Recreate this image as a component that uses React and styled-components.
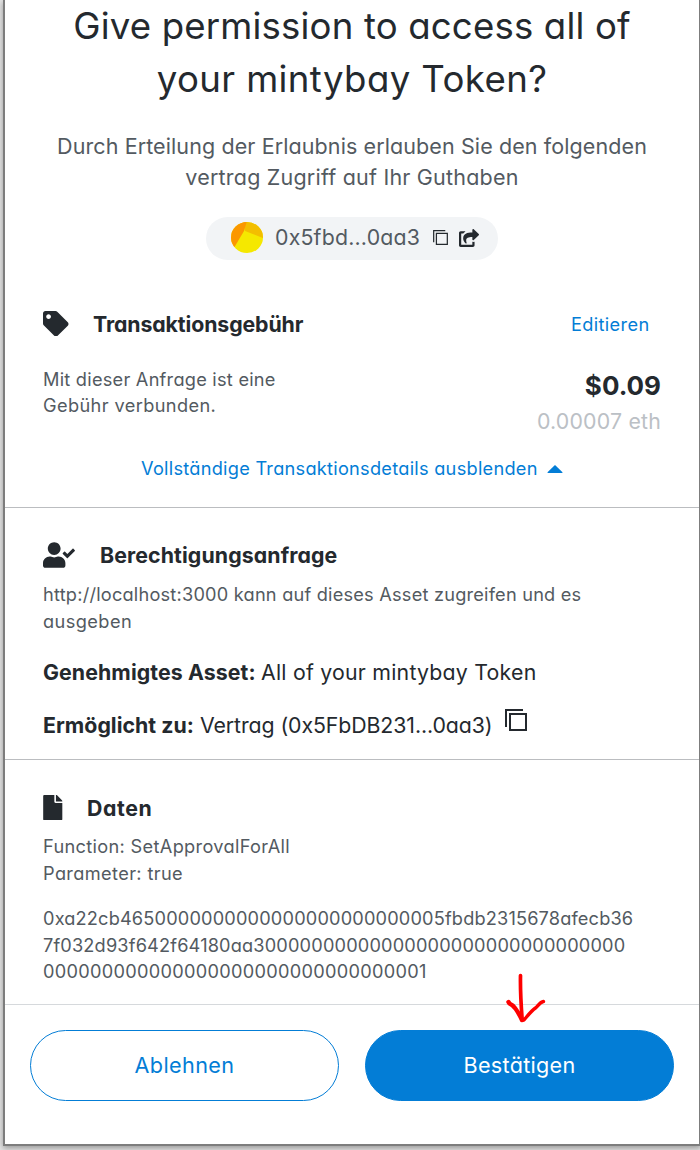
import React from "react";
import styled, { createGlobalStyle, css } from "styled-components";
import { FaTag, FaUserCheck, FaFile, FaShareSquare } from "react-icons/fa";

const GlobalStyle = createGlobalStyle`
  * { box-sizing: border-box; }
  body {
    margin: 0;
    height: 1150px;
    overflow: hidden;
    background: #e4e4e4;
    font-family: Inter, "Liberation Sans", sans-serif;
    font-feature-settings: "cv11" 1, "ss03" 1;
    color: #24292e;
  }
`;

const Stage = styled.div`
  width: 700px;
  height: 1150px;
  padding-left: 3px;
  overflow: hidden;
  position: relative;
`;

const Popup = styled.div`
  width: 698px;
  height: 1146px;
  display: flex;
  flex-direction: column;
  background: #fff;
  border: 2px solid #7d7d7d;
  border-top: 0;
  box-shadow: 0 2px 6px rgba(0, 0, 0, 0.35);
  overflow: hidden;
`;

const Line = styled.div`
  white-space: nowrap;
  letter-spacing: ${(p) => p.$track || 0}px;
`;

const Intro = styled.header`
  height: 295px;
  flex: none;
  display: flex;
  flex-direction: column;
  align-items: center;
`;

const Title = styled.h1`
  margin: 0;
  font-size: 36.6px;
  font-weight: 400;
  line-height: 53px;
  text-align: center;
`;

const Description = styled.div`
  margin-top: 25px;
  font-size: 21.5px;
  line-height: 31px;
  color: #535a61;
  text-align: center;
`;

const Pill = styled.div`
  flex: none;
  width: 292px;
  height: 43px;
  margin-top: 24px;
  padding: 0 19px 2px 25px;
  border-radius: 22px;
  background: #f2f4f6;
  display: flex;
  align-items: center;
  color: #24292e;
`;

const Address = styled.div`
  flex: none;
  width: 170px;
  padding: 0 0 1px 12px;
  font-size: 21.3px;
  line-height: 30px;
  color: #535a61;
`;

const ShareIcon = styled(FaShareSquare)`
  flex: none;
  margin-left: 11px;
`;

const Section = styled.section`
  flex: none;
  height: ${(p) => p.$height}px;
  padding: ${(p) => p.$top}px 38px 0;
  border-bottom: 1px solid ${(p) => p.$rule || "#bbbdc0"};
`;

const HeadingRow = styled.div`
  display: flex;
  align-items: center;
  height: 28px;
`;

const IconBox = styled.span`
  display: flex;
  flex: none;
  width: ${(p) => p.$width}px;
  padding-bottom: 1px;
`;

const FileIcon = styled(FaFile)`
  margin-left: -3px;
`;

const Heading = styled.h2`
  margin: 0;
  font-size: 21.3px;
  font-weight: 700;
  line-height: 28px;
`;

const link = css`
  color: #037dd6;
  font-size: 18.2px;
`;

const EditLink = styled.a`
  ${link}
  margin-left: auto;
  margin-right: 11.5px;
`;

const FeeRow = styled.div`
  display: flex;
  justify-content: space-between;
  height: 71px;
  margin-top: 29px;
`;

const Note = styled.div`
  margin-top: ${(p) => p.$gap || 0}px;
  font-size: 18.2px;
  line-height: ${(p) => p.$leading || 26}px;
  color: #535a61;
`;

const Amounts = styled.div`
  display: flex;
  flex-direction: column;
  align-items: flex-end;
`;

const Fiat = styled.div`
  font-size: 26px;
  font-weight: 700;
  line-height: 38px;
`;

const Crypto = styled.div`
  font-size: 21.3px;
  line-height: 33px;
  color: #bbc0c5;
`;

const Toggle = styled.a`
  ${link}
  display: flex;
  align-items: center;
  margin: 17px 0 0 98px;
  height: 26px;
  gap: 9px;
`;

const Caret = styled.svg`
  margin-top: 1px;
`;

const Detail = styled.div`
  display: flex;
  align-items: center;
  height: 28px;
  margin-top: ${(p) => p.$gap}px;
  font-size: 21.3px;
`;

const Strong = styled.strong`
  flex: none;
  width: ${(p) => p.$width}px;
  font-weight: 700;
`;

const BigCopy = styled.span`
  display: flex;
  margin: 0 0 11px 13px;
`;

const Footer = styled.footer`
  display: flex;
  gap: 26px;
  padding: 25px 25px 0;
`;

const Button = styled.button`
  width: 309px;
  height: 71px;
  padding: 0 0 2px;
  display: flex;
  align-items: center;
  justify-content: center;
  border: 1px solid #037dd6;
  border-radius: 36px;
  background: ${(p) => (p.$primary ? "#037dd6" : "#fff")};
  color: ${(p) => (p.$primary ? "#fff" : "#037dd6")};
  font: inherit;
  font-feature-settings: inherit;
  font-size: 21.6px;
`;

const PointerArrow = styled.svg`
  position: absolute;
  left: 500px;
  top: 966px;
`;

const Disc = styled.svg`
  flex: none;
`;

function CopyIcon({ size, stroke = 2 }) {
  return (
    <svg width={size} height={size} viewBox="0 0 22 22" fill="none" stroke="#24292e" strokeWidth={stroke}>
      <path d="M1 18V1h17" />
      <path d="M5 5h16v16H5z" />
    </svg>
  );
}

function Avatar() {
  return (
    <Disc width="32" height="31" viewBox="0 0 32 31">
      <clipPath id="disc">
        <ellipse cx="16" cy="15.5" rx="16" ry="15.5" />
      </clipPath>
      <g clipPath="url(#disc)">
        <path fill="#f5e800" d="M0 0h32v31H0z" />
        <path fill="#f3be00" d="M13 -1h20v17.5L14 9z" />
        <path fill="#fb9700" d="M-1 -1h17L13 9 3.5 25-1 27z" />
      </g>
    </Disc>
  );
}

export default function App() {
  return (
    <Stage>
      <GlobalStyle />
      <Popup>
        <Intro>
          <Title>
            <Line $track={0.17}>Give permission to access all of</Line>
            <Line $track={0.4}>your mintybay Token?</Line>
          </Title>
          <Description>
            <Line $track={0.1}>Durch Erteilung der Erlaubnis erlauben Sie den folgenden</Line>
            <Line $track={0.21}>vertrag Zugriff auf Ihr Guthaben</Line>
          </Description>
          <Pill>
            <Avatar />
            <Address>
              <Line $track={0.2}>0x5fbd...0aa3</Line>
            </Address>
            <CopyIcon size={15} stroke={1.8} />
            <ShareIcon size={20} />
          </Pill>
        </Intro>

        <Section $height={213} $top={15}>
          <HeadingRow>
            <IconBox $width={50}>
              <FaTag size={25.5} />
            </IconBox>
            <Heading>
              <Line $track={-0.1}>Transaktionsgebühr</Line>
            </Heading>
            <EditLink>
              <Line $track={0.35}>Editieren</Line>
            </EditLink>
          </HeadingRow>
          <FeeRow>
            <Note $gap={-1}>
              <Line $track={0.24}>Mit dieser Anfrage ist eine</Line>
              <Line $track={0.38}>Gebühr verbunden.</Line>
            </Note>
            <Amounts>
              <Fiat>
                <Line $track={0}>$0.09</Line>
              </Fiat>
              <Crypto>
                <Line $track={0.2}>0.00007 eth</Line>
              </Crypto>
            </Amounts>
          </FeeRow>
          <Toggle>
            <Line $track={0.26}>Vollständige Transaktionsdetails ausblenden</Line>
            <Caret width="16" height="8" viewBox="0 0 16 8">
              <path fill="#037dd6" d="M8 0l7.500 7.200q.3.8-.6.8H1.100q-.9 0-.6-.8z" />
            </Caret>
          </Toggle>
        </Section>

        <Section $height={252} $top={33}>
          <HeadingRow>
            <IconBox $width={57}>
              <FaUserCheck size={32} />
            </IconBox>
            <Heading>
              <Line $track={0.11}>Berechtigungsanfrage</Line>
            </Heading>
          </HeadingRow>
          <Note $gap={12} $leading={27}>
            <Line $track={0.21}>http://localhost:3000 kann auf dieses Asset zugreifen und es</Line>
            <Line $track={0.42}>ausgeben</Line>
          </Note>
          <Detail $gap={23}>
            <Strong $width={218}>
              <Line $track={0.1}>Genehmigtes Asset:</Line>
            </Strong>
            <Line $track={0.23}>All of your mintybay Token</Line>
          </Detail>
          <Detail $gap={25}>
            <Strong $width={157}>
              <Line $track={0.03}>Ermöglicht zu:</Line>
            </Strong>
            <Line $track={-0.09}>Vertrag (0x5FbDB231...0aa3)</Line>
            <BigCopy>
              <CopyIcon size={22} />
            </BigCopy>
          </Detail>
        </Section>

        <Section $height={245} $top={34} $rule="#d6d9dc">
          <HeadingRow>
            <IconBox $width={44}>
              <FileIcon size={25.5} />
            </IconBox>
            <Heading>
              <Line $track={0.6}>Daten</Line>
            </Heading>
          </HeadingRow>
          <Note $gap={11} $leading={27}>
            <Line $track={0.32}>Function: SetApprovalForAll</Line>
            <Line $track={0.36}>Parameter: true</Line>
          </Note>
          <Note $gap={18} $leading={26.5}>
            <Line $track={0.16}>0xa22cb4650000000000000000000000005fbdb2315678afecb36</Line>
            <Line $track={0.16}>7f032d93f642f64180aa30000000000000000000000000000000</Line>
            <Line $track={0.28}>000000000000000000000000000000001</Line>
          </Note>
        </Section>

        <Footer>
          <Button>
            <Line $track={0.4}>Ablehnen</Line>
          </Button>
          <Button $primary>
            <Line $track={0.28}>Bestätigen</Line>
          </Button>
        </Footer>
      </Popup>
      <PointerArrow width="60" height="62" viewBox="0 0 60 62" fill="none" stroke="#fe0000" strokeLinecap="round" strokeLinejoin="round">
        <path strokeWidth="3.700" d="M20.500 9.500c-.3 14 .6 30 1.700 44.500" />
        <path strokeWidth="4.400" d="M8.500 36l1 1.500c5 2 9 9 12.500 16.500" />
        <path strokeWidth="3.400" d="M43.500 35.500c-4 .5-5.500 5-8 6.500-4.500 3-8 8-11.500 12h-2" />
      </PointerArrow>
    </Stage>
  );
}
